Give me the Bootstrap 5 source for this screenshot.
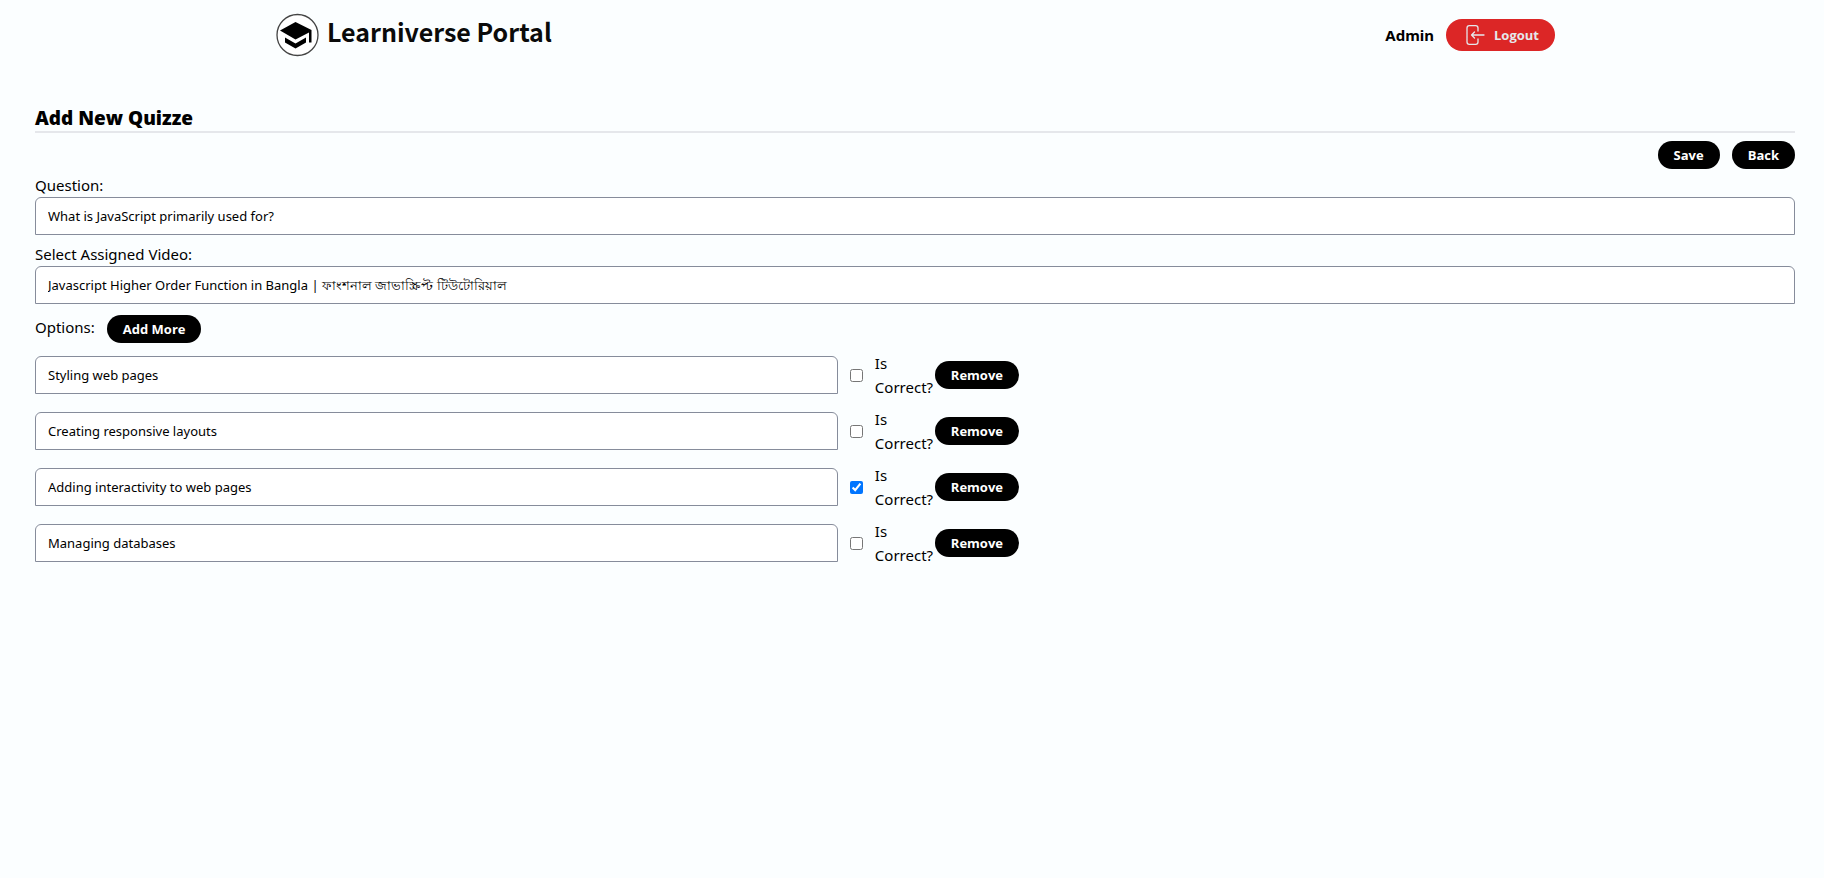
<!DOCTYPE html>
<html lang="en">
<head>
<meta charset="utf-8">
<meta name="viewport" content="width=device-width, initial-scale=1">
<title>Learniverse Portal</title>
<link href="https://cdn.jsdelivr.net/npm/bootstrap@5.3.0/dist/css/bootstrap.min.css" rel="stylesheet">
<style>
  body { background: #fbfeff; color: #000; font-family: "Noto Sans", "Open Sans", sans-serif; font-size: 15px; line-height: 24px; }
  .page-wrap { padding: 0 29px 0 35px; }
  .site-header { max-width: 1280px; height: 70px; }
  .brand { color: #0a0a0a; font-family: "Noto Sans CJK JP", "Noto Sans", sans-serif; font-size: 25px; font-weight: 700; line-height: 36px; }
  .brand-icon { width: 44px; height: 44px; }
  .user-name { font-size: 15px; font-weight: 700; }
  .pill { --bs-btn-padding-x: 16px; --bs-btn-padding-y: 4px; --bs-btn-font-family: "Open Sans", sans-serif; --bs-btn-font-size: 13px; --bs-btn-font-weight: 700; --bs-btn-line-height: 20px; --bs-btn-border-width: 0; --bs-btn-border-radius: 16px; }
  .pill-dark { --bs-btn-color: #fff; --bs-btn-bg: #000; --bs-btn-hover-color: #fff; --bs-btn-hover-bg: #222; }
  .pill-logout { --bs-btn-color: #e5e7eb; --bs-btn-bg: #dc2626; --bs-btn-hover-color: #fff; --bs-btn-hover-bg: #b91c1c; --bs-btn-padding-y: 6px; }
  .page-title { font-family: "Open Sans", sans-serif; font-size: 19px; font-weight: 800; line-height: 26px; border-bottom: 2px solid #e5e7eb; margin-top: 35px; }
  .field-group { margin-bottom: 7px; }
  .field { height: 38px; padding: 8px 12px; border: 1px solid #868c9b; border-radius: 6px 6px 0 0; background: #fff; color: #000; font-size: 13px; line-height: 20px; }
  .field:focus { color: #000; }
  .option-list { max-width: 984px; }
  .tick { width: 13px; height: 13px; margin: 0 12px; }
  .tick-label { width: 60px; }
</style>
</head>
<body>
<div class="page-wrap">
  <header class="site-header mx-auto d-flex align-items-center justify-content-between">
    <a href="#" class="d-flex text-decoration-none gap-2">
      <svg class="brand-icon" viewBox="0 0 44 44" aria-hidden="true">
        <circle cx="22.500" cy="22" r="20.500" fill="#fff" stroke="#444" stroke-width="1.3"/>
        <path d="M5 17.500 20.500 9 36.500 17V29.500H34V19.500L20.500 26.500Z" fill="#000"/>
        <path d="M10 24.500 20.500 30.500 31 24.500V29.500L20.500 35.500 10 29.500Z" fill="#000"/>
      </svg>
      <span class="brand">Learniverse Portal</span>
    </a>
    <div class="d-flex align-items-center gap-2">
      <span class="user-name me-1">Admin</span>
      <button type="button" class="btn pill pill-logout d-flex align-items-center gap-2">
        <svg width="24" height="20" viewBox="0 0 24 20" fill="none" stroke="currentColor" stroke-width="1.3" stroke-linecap="round" stroke-linejoin="round" aria-hidden="true">
          <path d="M16 6V3Q16 .7 13.700 .7H7.300Q5 .7 5 3V17Q5 19.300 7.300 19.300H13.700Q16 19.300 16 17V14M22 10H9.500M12.500 7 9.500 10 12.500 13"/>
        </svg>
        <span>Logout</span>
      </button>
    </div>
  </header>

  <main>
    <h1 class="page-title mb-2">Add New Quizze</h1>
    <form>
      <div class="d-flex justify-content-end gap-2 mb-1">
        <button type="submit" class="btn pill pill-dark me-1">Save</button>
        <button type="button" class="btn pill pill-dark">Back</button>
      </div>
      <div class="field-group">
        <label class="d-block" for="question">Question:</label>
        <input type="text" class="form-control field" id="question" value="What is JavaScript primarily used for?">
      </div>
      <div class="field-group">
        <label class="d-block" for="video">Select Assigned Video:</label>
        <select class="form-control field" id="video">
          <option>Javascript Higher Order Function in Bangla | ফাংশনাল জাভাস্ক্রিপ্ট টিউটোরিয়াল</option>
        </select>
      </div>
      <div class="d-flex align-items-start gap-2 pt-1 mb-2">
        <span class="me-1">Options:</span>
        <button type="button" class="btn pill pill-dark">Add More</button>
      </div>
      <div class="option-list d-grid gap-2">
        <div class="d-flex align-items-center">
          <input type="text" class="form-control field" aria-label="Option 1" value="Styling web pages">
          <input type="checkbox" class="tick flex-shrink-0" id="c1">
          <label class="tick-label flex-shrink-0" for="c1">Is Correct?</label>
          <button type="button" class="btn pill pill-dark flex-shrink-0">Remove</button>
        </div>
        <div class="d-flex align-items-center">
          <input type="text" class="form-control field" aria-label="Option 2" value="Creating responsive layouts">
          <input type="checkbox" class="tick flex-shrink-0" id="c2">
          <label class="tick-label flex-shrink-0" for="c2">Is Correct?</label>
          <button type="button" class="btn pill pill-dark flex-shrink-0">Remove</button>
        </div>
        <div class="d-flex align-items-center">
          <input type="text" class="form-control field" aria-label="Option 3" value="Adding interactivity to web pages">
          <input type="checkbox" class="tick flex-shrink-0" id="c3" checked>
          <label class="tick-label flex-shrink-0" for="c3">Is Correct?</label>
          <button type="button" class="btn pill pill-dark flex-shrink-0">Remove</button>
        </div>
        <div class="d-flex align-items-center">
          <input type="text" class="form-control field" aria-label="Option 4" value="Managing databases">
          <input type="checkbox" class="tick flex-shrink-0" id="c4">
          <label class="tick-label flex-shrink-0" for="c4">Is Correct?</label>
          <button type="button" class="btn pill pill-dark flex-shrink-0">Remove</button>
        </div>
      </div>
    </form>
  </main>
</div>
<script src="https://cdn.jsdelivr.net/npm/bootstrap@5.3.0/dist/js/bootstrap.bundle.min.js"></script>
</body>
</html>
